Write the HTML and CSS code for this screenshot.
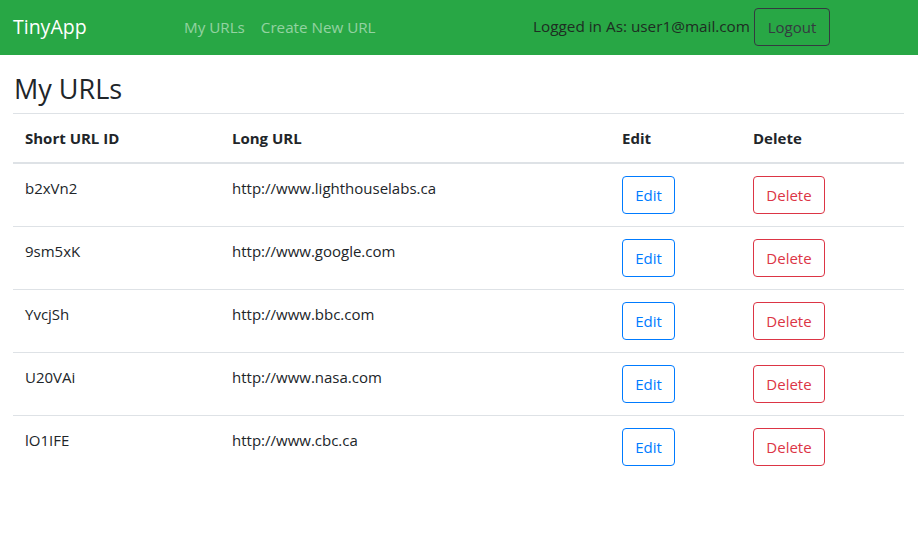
FILE: index.html
```html
<!DOCTYPE html>
<html lang="en">
<head>
<meta charset="utf-8">
<title>TinyApp</title>
<link rel="stylesheet" href="styles.css">
</head>
<body>
<nav class="navbar">
  <a class="brand" href="#">TinyApp</a>
  <div class="nav-links">
    <a class="nav-link" href="#">My URLs</a>
    <a class="nav-link" href="#">Create New URL</a>
  </div>
  <div class="user">
    <span class="user-text">Logged in As: user1@mail.com</span>
    <button class="btn btn-dark-outline">Logout</button>
  </div>
</nav>
<main class="content">
  <h3 class="title">My URLs</h3>
  <table class="table">
    <thead>
      <tr>
        <th class="c1">Short URL ID</th>
        <th class="c2">Long URL</th>
        <th class="c3">Edit</th>
        <th class="c4">Delete</th>
      </tr>
    </thead>
    <tbody>
      <tr><td>b2xVn2</td><td>http://www.lighthouselabs.ca</td><td><button class="btn btn-edit">Edit</button></td><td><button class="btn btn-delete">Delete</button></td></tr>
      <tr><td>9sm5xK</td><td>http://www.google.com</td><td><button class="btn btn-edit">Edit</button></td><td><button class="btn btn-delete">Delete</button></td></tr>
      <tr><td>YvcjSh</td><td>http://www.bbc.com</td><td><button class="btn btn-edit">Edit</button></td><td><button class="btn btn-delete">Delete</button></td></tr>
      <tr><td>U20VAi</td><td>http://www.nasa.com</td><td><button class="btn btn-edit">Edit</button></td><td><button class="btn btn-delete">Delete</button></td></tr>
      <tr><td>lO1IFE</td><td>http://www.cbc.ca</td><td><button class="btn btn-edit">Edit</button></td><td><button class="btn btn-delete">Delete</button></td></tr>
    </tbody>
  </table>
</main>
</body>
</html>
```
FILE: styles.css
```css
* { box-sizing: border-box; }
html, body {
  margin: 0;
  padding: 0;
  background: #fff;
}
body {
  font-family: "Open Sans", "Noto Sans", "Liberation Sans", sans-serif;
  font-size: 15px;
  line-height: 24px;
  color: #212529;
}
.navbar {
  height: 55px;
  background: #28a745;
  display: flex;
  align-items: flex-start;
  padding: 0 0 0 13px;
}
.brand {
  color: #fff;
  text-decoration: none;
  font-size: 19.5px;
  line-height: 30px;
  margin-top: 12px;
  width: 163px;
}
.nav-links {
  display: flex;
  margin-top: 12px;
}
.nav-link {
  color: rgba(255, 255, 255, 0.5);
  text-decoration: none;
  padding: 3px 8px;
  line-height: 24px;
  font-size: 15.2px;
}
.user {
  margin-left: auto;
  margin-right: 88px;
  display: flex;
  align-items: flex-start;
  gap: 4px;
  padding-top: 8px;
}
.user-text {
  color: #1e2d22;
  line-height: 36px;
  margin-top: 0;
  font-size: 15.3px;
}
.btn {
  font-family: inherit;
  font-size: 15px;
  line-height: 24px;
  height: 38px;
  padding: 6px 12px;
  background: transparent;
  border: 1px solid;
  border-radius: 4px;
  cursor: pointer;
}
.btn-dark-outline {
  color: #343a40;
  border-color: #343a40;
  width: 76px;
}
.btn-edit {
  color: #007bff;
  border-color: #007bff;
  width: 53px;
}
.btn-delete {
  color: #dc3545;
  border-color: #dc3545;
  width: 72px;
}
.content {
  padding: 0 14px 0 13px;
}
.title {
  font-size: 27px;
  font-weight: 500;
  line-height: 33px;
  margin: 17px 0 8px 1px;
}
.table {
  width: 100%;
  border-collapse: collapse;
}
.table th,
.table td {
  padding: 12px;
  text-align: left;
  vertical-align: top;
  border-top: 1px solid #dee2e6;
}
.table thead th {
  font-weight: 700;
  vertical-align: bottom;
  border-bottom: 2px solid #dee2e6;
}
.c1 { width: 207px; }
.c2 { width: 390px; }
.c3 { width: 131px; }
.c4 { width: 163px; }
```
